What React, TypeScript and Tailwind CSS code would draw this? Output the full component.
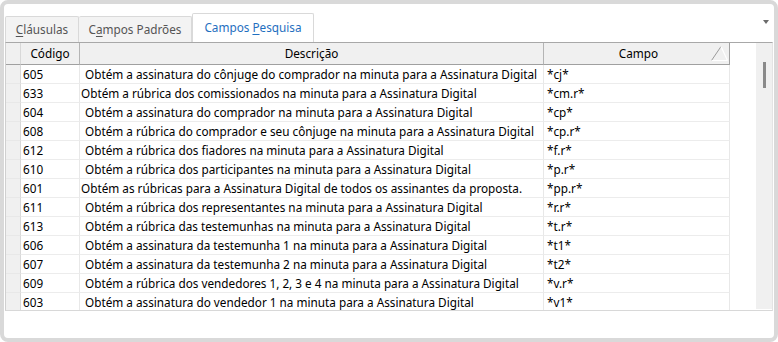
import React from 'react';

interface Row {
  code: string;
  desc: string;
  field: string;
  tight?: boolean; // a few descriptions have no leading space
}

const rows: Row[] = [
  { code: '605', desc: 'Obtém a assinatura do cônjuge do comprador na minuta para a Assinatura Digital', field: '*cj*' },
  { code: '633', desc: 'Obtém a rúbrica dos comissionados na minuta para a Assinatura Digital', field: '*cm.r*', tight: true },
  { code: '604', desc: 'Obtém a assinatura do comprador na minuta para a Assinatura Digital', field: '*cp*' },
  { code: '608', desc: 'Obtém a rúbrica do comprador e seu cônjuge na minuta para a Assinatura Digital', field: '*cp.r*' },
  { code: '612', desc: 'Obtém a rúbrica dos fiadores na minuta para a Assinatura Digital', field: '*f.r*' },
  { code: '610', desc: 'Obtém a rúbrica dos participantes na minuta para a Assinatura Digital', field: '*p.r*' },
  { code: '601', desc: 'Obtém as rúbricas para a Assinatura Digital de todos os assinantes da proposta.', field: '*pp.r*', tight: true },
  { code: '611', desc: 'Obtém a rúbrica dos representantes na minuta para a Assinatura Digital', field: '*r.r*' },
  { code: '613', desc: 'Obtém a rúbrica das testemunhas na minuta para a Assinatura Digital', field: '*t.r*' },
  { code: '606', desc: 'Obtém a assinatura da testemunha 1 na minuta para a Assinatura Digital', field: '*t1*' },
  { code: '607', desc: 'Obtém a assinatura da testemunha 2 na minuta para a Assinatura Digital', field: '*t2*' },
  { code: '609', desc: 'Obtém a rúbrica dos vendedores 1, 2, 3 e 4 na minuta para a Assinatura Digital', field: '*v.r*' },
  { code: '603', desc: 'Obtém a assinatura do vendedor 1 na minuta para a Assinatura Digital', field: '*v1*' },
];

function SortGlyph() {
  return (
    <svg width="17" height="15" viewBox="0 0 17 15" className="shrink-0">
      <line x1="0.5" y1="14.5" x2="10" y2="0.5" stroke="#9a9a9a" strokeWidth="1" />
      <line x1="10" y1="0.5" x2="16.5" y2="14.5" stroke="#ffffff" strokeWidth="1.2" />
      <line x1="0.5" y1="14.5" x2="16.5" y2="14.5" stroke="#ffffff" strokeWidth="1.2" />
    </svg>
  );
}

export default function App() {
  return (
    <div
      className="w-[778px] h-[342px] border-4 border-[#d9d9d9] rounded-[8px] bg-white flex flex-col text-[11.75px] text-black overflow-hidden"
      style={{ fontFamily: '"Noto Sans", "Open Sans", sans-serif' }}
    >
      {/* Tabs */}
      <div className="h-[38px] flex items-end pl-[1px] pr-[5px]">
        <div className="w-[74px] h-[26px] border border-b-0 border-[#d9d9d9] rounded-t-[2px] bg-[#f3f3f3] flex items-center justify-center text-[#555555]">
          <span><u className="underline-offset-2">C</u>láusulas</span>
        </div>
        <div className="w-[113px] h-[26px] border border-b-0 border-l-0 border-[#d9d9d9] rounded-t-[2px] bg-[#f3f3f3] flex items-center justify-center text-[#555555]">
          <span>C<u className="underline-offset-2">a</u>mpos Padrões</span>
        </div>
        <div className="w-[122px] h-[29px] border border-b-0 border-[#d9d9d9] rounded-t-[2px] bg-white flex items-center justify-center text-[#1f6fc0] pb-[1px]">
          <span>Campos <u className="underline-offset-2">P</u>esquisa</span>
        </div>
        <div className="ml-auto self-start mt-[16px] w-0 h-0 border-l-[3px] border-r-[3px] border-t-[4px] border-l-transparent border-r-transparent border-t-[#6b6b6b]" />
      </div>

      {/* Grid */}
      <div className="ml-[1px] mr-[1px] h-[269px] border-t border-t-[#a8a8a8] border-l border-l-[#d0d0d0] border-r border-r-[#e4e4e4] border-b border-b-[#d8d8d8] flex">
        <div className="flex-1 flex flex-col overflow-hidden">
          {/* Header */}
          <div className="h-[22px] flex shrink-0">
            <div className="w-[15px] h-full bg-[#f0f0f0] border-b border-b-[#a0a0a0] border-r border-r-[#d8d8d8]" />
            <div className="w-[59px] h-full bg-[#f0f0f0] border-b border-b-[#a0a0a0] border-r border-r-[#b4b4b4] flex items-center justify-center">
              Código
            </div>
            <div className="w-[464px] h-full bg-[#f0f0f0] border-b border-b-[#a0a0a0] border-r border-r-[#b4b4b4] flex items-center justify-center">
              Descrição
            </div>
            <div className="w-[186px] h-full bg-[#f0f0f0] border-b border-b-[#a0a0a0] border-r border-r-[#a0a0a0] flex items-center relative">
              <span className="flex-1 text-center pl-[4px]">Campo</span>
              <div className="absolute right-[1px] top-[3px]">
                <SortGlyph />
              </div>
            </div>
            <div className="flex-1 h-full" />
          </div>

          {/* Body */}
          <div className="flex-1 overflow-hidden">
            {rows.map((r) => (
              <div key={r.code} className="h-[19px] flex leading-[18px]">
                <div className="w-[15px] h-full bg-[#f0f0f0] border-r border-r-[#d8d8d8] border-b border-b-[#e8e8e8]" />
                <div className="w-[59px] h-full border-r border-r-[#e8e8e8] border-b border-b-[#ececec] pl-[2px] whitespace-nowrap">
                  {r.code}
                </div>
                <div
                  className={`w-[464px] h-full border-r border-r-[#e8e8e8] border-b border-b-[#ececec] whitespace-nowrap overflow-hidden ${
                    r.tight ? 'pl-[1px]' : 'pl-[5px]'
                  }`}
                >
                  {r.desc}
                </div>
                <div className="w-[186px] h-full border-r border-r-[#e8e8e8] border-b border-b-[#ececec] pl-[3px] whitespace-nowrap">
                  {r.field}
                </div>
                <div className="flex-1 h-full" />
              </div>
            ))}
          </div>
        </div>

        {/* Scrollbar */}
        <div className="w-[16px] bg-[#f0f0f0] mb-[1px] pt-[19px] flex justify-center">
          <div className="w-[3px] h-[26px] bg-[#8a8a8a]" />
        </div>
      </div>
    </div>
  );
}
